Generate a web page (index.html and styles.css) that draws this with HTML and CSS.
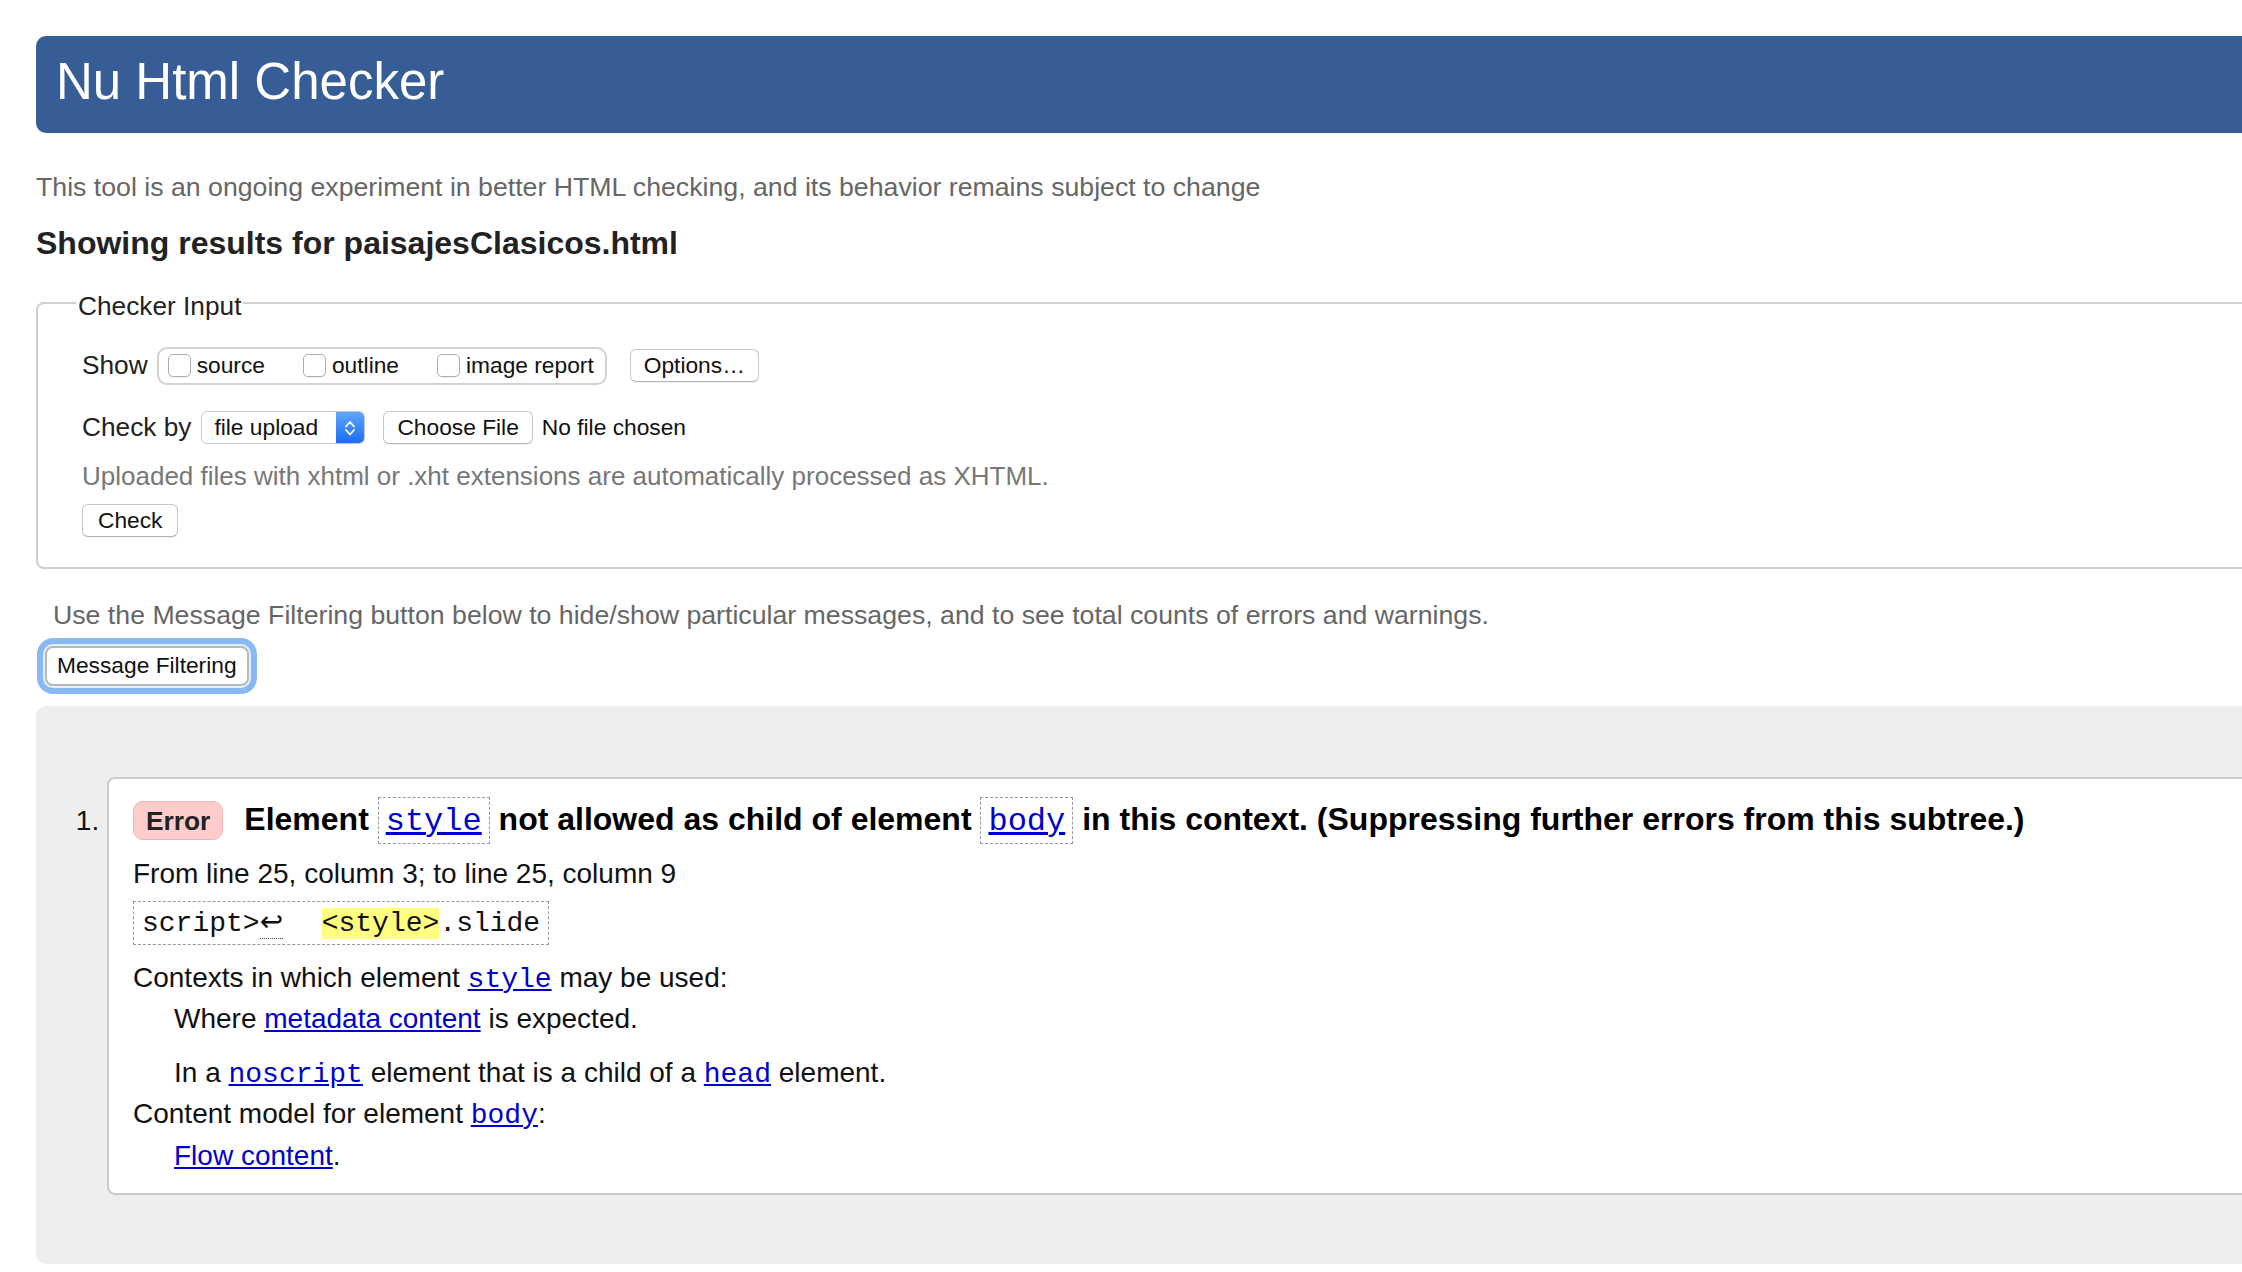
FILE: index.html
```html
<!DOCTYPE html>
<html lang="en">
<head>
<meta charset="utf-8">
<title>Showing results for paisajesClasicos.html - Nu Html Checker</title>
<link rel="stylesheet" href="styles.css">
</head>
<body>
<div class="page">
  <h1 class="banner">Nu Html Checker</h1>
  <p class="intro">This tool is an ongoing experiment in better HTML checking, and its behavior remains subject to change</p>
  <h2 class="results-title">Showing results for paisajesClasicos.html</h2>

  <fieldset class="checker">
    <legend>Checker Input</legend>
    <div class="row row-show">
      <span class="row-label">Show</span>
      <span class="group">
        <label class="opt"><span class="box"></span>source</label>
        <label class="opt"><span class="box"></span>outline</label>
        <label class="opt"><span class="box"></span>image report</label>
      </span>
      <span class="btn btn-options">Options…</span>
    </div>
    <div class="row row-check">
      <span class="row-label">Check by</span>
      <span class="select">
        <span class="select-value">file upload</span>
        <span class="select-arrows">
          <svg width="28" height="33" viewBox="0 0 28 33" aria-hidden="true"><path d="M10 15.5 L14 11 L18 15.5 M10 19 L14 23.5 L18 19" fill="none" stroke="#fff" stroke-width="1.8" stroke-linecap="round" stroke-linejoin="round"/></svg>
        </span>
      </span>
      <span class="btn btn-file">Choose File</span>
      <span class="file-status">No file chosen</span>
    </div>
    <p class="note">Uploaded files with xhtml or .xht extensions are automatically processed as XHTML.</p>
    <div class="check-wrap"><span class="btn btn-check">Check</span></div>
  </fieldset>

  <p class="filter-note">Use the Message Filtering button below to hide/show particular messages, and to see total counts of errors and warnings.</p>
  <div class="filter-wrap"><span class="filter-btn">Message Filtering</span></div>

  <div class="results">
    <ol class="messages">
      <li class="msg">
        <p class="msg-title"><span class="badge">Error</span><strong>Element <code class="cbox"><a href="#">style</a></code> not allowed as child of element <code class="cbox"><a href="#">body</a></code> in this context. (Suppressing further errors from this subtree.)</strong></p>
        <p class="location">From line 25, column 3; to line 25, column 9</p>
        <div class="extract"><code>script&gt;<span class="lf">↩</span>  <mark>&lt;style&gt;</mark>.slide</code></div>
        <dl class="details">
          <dt>Contexts in which element <a href="#"><code>style</code></a> may be used:</dt>
          <dd>
            <p class="dd-first">Where <a href="#">metadata content</a> is expected.</p>
            <p class="dd-second">In a <a href="#"><code>noscript</code></a> element that is a child of a <a href="#"><code>head</code></a> element.</p>
          </dd>
          <dt>Content model for element <a href="#"><code>body</code></a>:</dt>
          <dd class="dd-flow"><a href="#">Flow content</a>.</dd>
        </dl>
      </li>
    </ol>
  </div>
</div>
</body>
</html>
```

FILE: styles.css
```css
html, body {
  margin: 0;
  padding: 0;
  overflow: hidden;
  background: #fff;
}

body {
  font-family: "Liberation Sans", Arial, Helvetica, sans-serif;
  color: #222;
}

code {
  font-family: "Liberation Mono", "Courier New", monospace;
}

a {
  color: #00c;
  text-decoration: underline;
}

.page {
  width: 2400px;
  box-sizing: border-box;
  padding: 36px 0 0 36px;
}

/* Header */
.banner {
  margin: 0;
  height: 97px;
  box-sizing: border-box;
  padding: 0 0 6px 20px;
  line-height: 91px;
  font-size: 51px;
  font-weight: normal;
  color: #fff;
  background: #365d95;
  border-radius: 10px;
}

.intro {
  margin: 38px 0 0;
  font-size: 26.7px;
  line-height: 32px;
  color: #666;
}

.results-title {
  margin: 22px 0 0;
  font-size: 32px;
  line-height: 36px;
  font-weight: bold;
  color: #222;
}

/* Checker input fieldset */
.checker {
  margin: 23.5px 0 0;
  padding: 26px 0 30px 44px;
  border: 2px solid #cfcfcf;
  border-radius: 8px;
  min-width: 0;
}

.checker legend {
  margin-left: -6px;
  padding: 6px 2px 0;
  font-size: 26.25px;
  line-height: 30px;
  color: #222;
}

.row {
  display: flex;
  align-items: center;
  font-size: 26.25px;
  color: #222;
}

.row-show {
  height: 38px;
}

.row-check {
  margin-top: 26px;
  height: 33px;
}

.row-label {
  margin-right: 9px;
}

.row-check .row-label {
  margin-right: 10px;
}

.group {
  display: flex;
  align-items: center;
  height: 38px;
  box-sizing: border-box;
  padding: 0 11px 0 9px;
  border: 2px solid #d2d2d2;
  border-radius: 10px;
  gap: 38px;
  font-size: 22.75px;
  color: #111;
}

.opt {
  display: flex;
  align-items: center;
  gap: 6px;
}

.box {
  display: inline-block;
  width: 21px;
  height: 21px;
  border: 1px solid #aeaeae;
  border-radius: 5px;
  background: #fff;
  box-shadow: 0 1px 1px rgba(0, 0, 0, 0.06);
}

.btn {
  display: inline-flex;
  align-items: center;
  height: 33px;
  box-sizing: border-box;
  padding: 0 13px;
  border: 1px solid #c6c6c6;
  border-bottom-color: #b4b4b4;
  border-radius: 6px;
  background: #fff;
  font-size: 22.75px;
  color: #111;
  box-shadow: 0 1px 1px rgba(0, 0, 0, 0.05);
}

.btn-options {
  margin-left: 23px;
}

.btn-check {
  padding: 0 15px;
}

.select {
  display: inline-flex;
  align-items: stretch;
  width: 164px;
  height: 33px;
  box-sizing: border-box;
  border: 1px solid #c6c6c6;
  border-radius: 6px;
  background: #fff;
  overflow: hidden;
  font-size: 22.75px;
  color: #111;
}

.select-value {
  flex: 1;
  display: flex;
  align-items: center;
  padding-left: 12px;
}

.select-arrows {
  width: 28px;
  display: flex;
  align-items: center;
  justify-content: center;
  background: linear-gradient(#5ea6fc, #1b6ef3);
}

.select-arrows svg {
  display: block;
}

.btn-file {
  margin-left: 18px;
}

.file-status {
  margin-left: 9px;
  font-size: 22.75px;
  color: #111;
}

.note {
  margin: 16px 0 0;
  font-size: 26px;
  line-height: 32px;
  color: #777;
}

.check-wrap {
  margin-top: 12px;
  display: flex;
}

/* Message filtering */
.filter-note {
  margin: 30px 0 0 17px;
  font-size: 26.7px;
  line-height: 32px;
  color: #666;
}

.filter-wrap {
  margin: 15px 0 0 9px;
  display: flex;
}

.filter-btn {
  display: inline-flex;
  align-items: center;
  height: 40px;
  box-sizing: border-box;
  padding: 0 10px;
  border: 2px solid #b9b9b9;
  border-radius: 8px;
  background: #fff;
  font-size: 22.75px;
  color: #111;
  box-shadow: 0 0 0 2px #e4eefb, 0 0 0 8px #88b9f3;
}

/* Results */
.results {
  margin-top: 20px;
  padding: 71px 0 69px 71px;
  background: #eee;
  border-radius: 10px;
}

.messages {
  margin: 0;
  padding: 0;
  list-style: decimal;
}

.msg {
  padding: 20px 24px 18px;
  background: #fff;
  border: 2px solid #cbcbcb;
  border-radius: 8px;
  font-size: 28px;
  line-height: 39px;
  color: #111;
}

.msg p {
  margin: 0;
}

.msg-title {
  font-size: 32px;
  line-height: 40px;
  color: #000;
}

.badge {
  display: inline-block;
  margin-right: 21px;
  padding: 2px 12px 0;
  line-height: 35px;
  font-size: 26.3px;
  font-weight: bold;
  color: #222;
  background: #fcc;
  border: 1px solid #e6b7b7;
  border-radius: 10px;
  vertical-align: baseline;
}

.cbox {
  padding: 5px 7px 3px;
  border: 1px dashed #999;
  font-weight: normal;
}

.msg .location {
  margin-top: 12px;
}

.extract {
  width: fit-content;
  margin-top: 8px;
  padding: 4px 8px;
  border: 1px dashed #999;
  line-height: 32px;
  white-space: pre;
  color: #111;
}

.extract code {
  font-size: 28px;
}

.lf {
  font-family: "DejaVu Sans", sans-serif;
  margin-right: 5px;
  border-bottom: 1px dotted #444;
}

.extract mark {
  background: #ffff80;
  color: #111;
}

.details {
  margin: 13px 0 0;
}

.details dt {
  font-weight: normal;
}

.details dd {
  margin: 0 0 0 41px;
}

.msg .details .dd-second {
  margin-top: 15px;
}

.details .dd-flow {
  margin-top: 1px;
}
```
